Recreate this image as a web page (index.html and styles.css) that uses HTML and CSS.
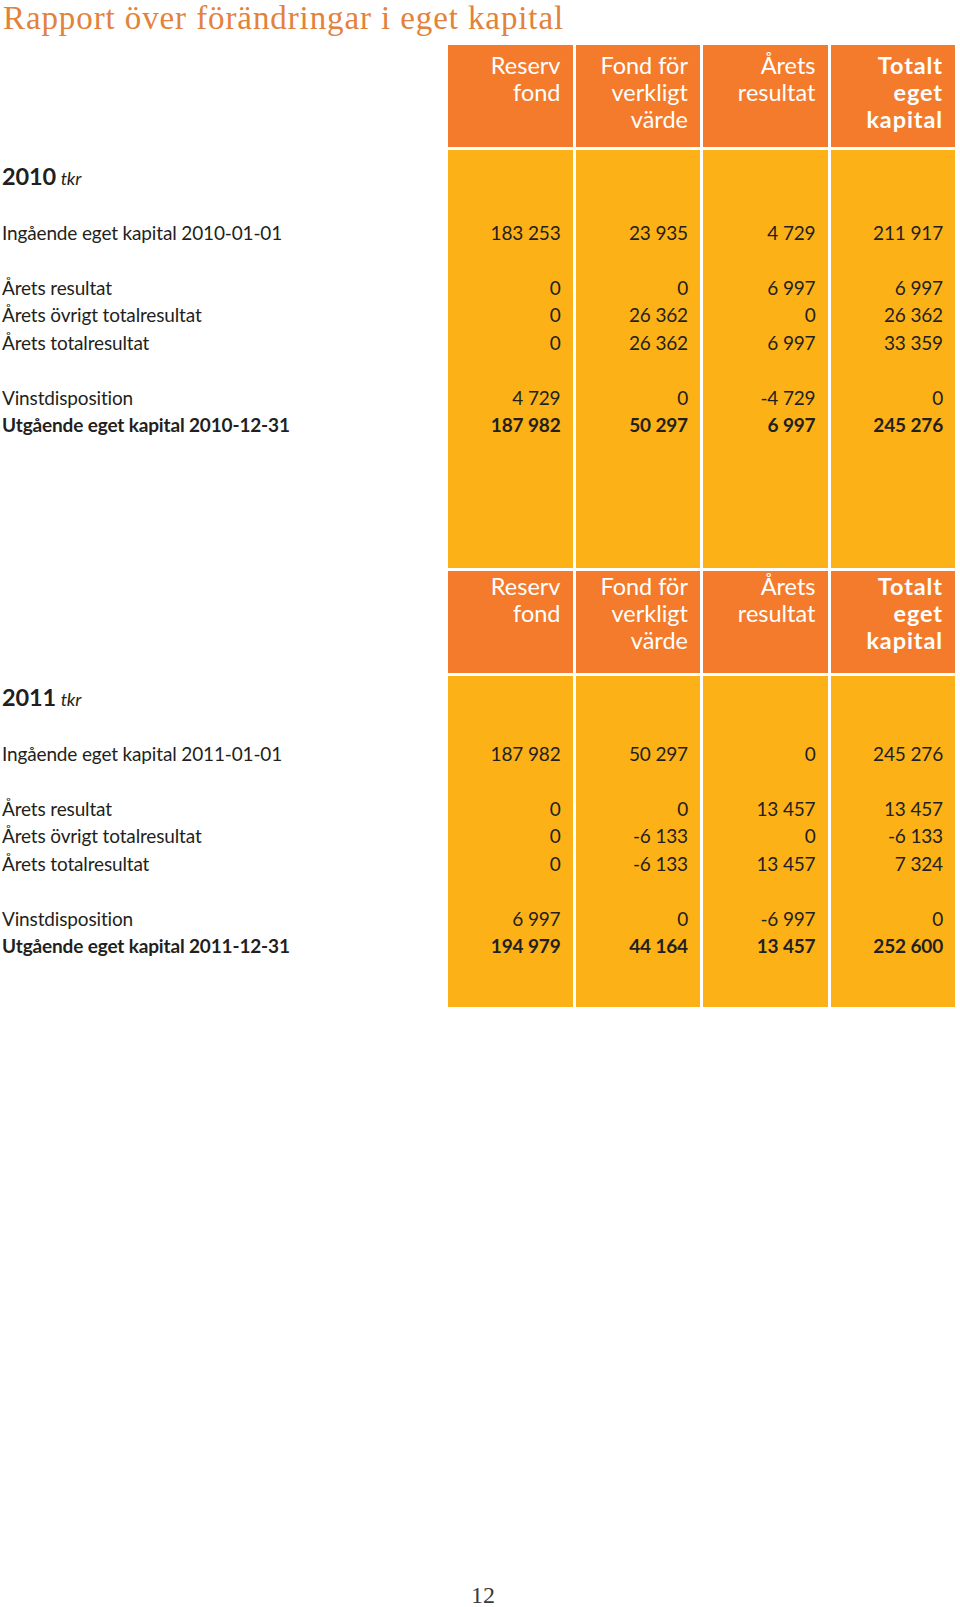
FILE: index.html
```html
<!DOCTYPE html>
<html lang="sv">
<head>
<meta charset="utf-8">
<title>Rapport över förändringar i eget kapital</title>
<link rel="stylesheet" href="styles.css">
</head>
<body>
<div class="page">
  <h1 class="title">Rapport över förändringar i eget kapital</h1>

  <section class="table t2010">
    <div class="row head">
      <div class="label"></div>
      <div class="hc">Reserv<br>fond</div>
      <div class="hc">Fond för<br>verkligt<br>värde</div>
      <div class="hc">Årets<br>resultat</div>
      <div class="hc strong">Totalt<br>eget<br>kapital</div>
    </div>
    <div class="body">
      <div class="row spacer top"><div class="label"></div><div class="v"></div><div class="v"></div><div class="v"></div><div class="v"></div></div>
      <div class="row year"><div class="label"><b>2010</b> <i>tkr</i></div><div class="v"></div><div class="v"></div><div class="v"></div><div class="v"></div></div>
      <div class="row"><div class="label"></div><div class="v"></div><div class="v"></div><div class="v"></div><div class="v"></div></div>
      <div class="row"><div class="label">Ingående eget kapital 2010-01-01</div><div class="v">183 253</div><div class="v">23 935</div><div class="v">4 729</div><div class="v">211 917</div></div>
      <div class="row"><div class="label"></div><div class="v"></div><div class="v"></div><div class="v"></div><div class="v"></div></div>
      <div class="row"><div class="label">Årets resultat</div><div class="v">0</div><div class="v">0</div><div class="v">6 997</div><div class="v">6 997</div></div>
      <div class="row"><div class="label">Årets övrigt totalresultat</div><div class="v">0</div><div class="v">26 362</div><div class="v">0</div><div class="v">26 362</div></div>
      <div class="row"><div class="label">Årets totalresultat</div><div class="v">0</div><div class="v">26 362</div><div class="v">6 997</div><div class="v">33 359</div></div>
      <div class="row"><div class="label"></div><div class="v"></div><div class="v"></div><div class="v"></div><div class="v"></div></div>
      <div class="row"><div class="label">Vinstdisposition</div><div class="v">4 729</div><div class="v">0</div><div class="v">-4 729</div><div class="v">0</div></div>
      <div class="row total"><div class="label">Utgående eget kapital 2010-12-31</div><div class="v">187 982</div><div class="v">50 297</div><div class="v">6 997</div><div class="v">245 276</div></div>
      <div class="row spacer bottom"><div class="label"></div><div class="v"></div><div class="v"></div><div class="v"></div><div class="v"></div></div>
    </div>
  </section>

  <section class="table t2011">
    <div class="row head">
      <div class="label"></div>
      <div class="hc">Reserv<br>fond</div>
      <div class="hc">Fond för<br>verkligt<br>värde</div>
      <div class="hc">Årets<br>resultat</div>
      <div class="hc strong">Totalt<br>eget<br>kapital</div>
    </div>
    <div class="body">
      <div class="row spacer top"><div class="label"></div><div class="v"></div><div class="v"></div><div class="v"></div><div class="v"></div></div>
      <div class="row year"><div class="label"><b>2011</b> <i>tkr</i></div><div class="v"></div><div class="v"></div><div class="v"></div><div class="v"></div></div>
      <div class="row"><div class="label"></div><div class="v"></div><div class="v"></div><div class="v"></div><div class="v"></div></div>
      <div class="row"><div class="label">Ingående eget kapital 2011-01-01</div><div class="v">187 982</div><div class="v">50 297</div><div class="v">0</div><div class="v">245 276</div></div>
      <div class="row"><div class="label"></div><div class="v"></div><div class="v"></div><div class="v"></div><div class="v"></div></div>
      <div class="row"><div class="label">Årets resultat</div><div class="v">0</div><div class="v">0</div><div class="v">13 457</div><div class="v">13 457</div></div>
      <div class="row"><div class="label">Årets övrigt totalresultat</div><div class="v">0</div><div class="v">-6 133</div><div class="v">0</div><div class="v">-6 133</div></div>
      <div class="row"><div class="label">Årets totalresultat</div><div class="v">0</div><div class="v">-6 133</div><div class="v">13 457</div><div class="v">7 324</div></div>
      <div class="row"><div class="label"></div><div class="v"></div><div class="v"></div><div class="v"></div><div class="v"></div></div>
      <div class="row"><div class="label">Vinstdisposition</div><div class="v">6 997</div><div class="v">0</div><div class="v">-6 997</div><div class="v">0</div></div>
      <div class="row total"><div class="label">Utgående eget kapital 2011-12-31</div><div class="v">194 979</div><div class="v">44 164</div><div class="v">13 457</div><div class="v">252 600</div></div>
      <div class="row spacer bottom"><div class="label"></div><div class="v"></div><div class="v"></div><div class="v"></div><div class="v"></div></div>
    </div>
  </section>

  <div class="pagenum">12</div>
</div>
</body>
</html>
```

FILE: styles.css
```css
* { box-sizing: border-box; }

html, body {
  margin: 0;
  padding: 0;
  background: #ffffff;
}

.page {
  width: 960px;
  height: 1607px;
  position: relative;
  font-family: "Lato", "Liberation Sans", sans-serif;
  color: #231f20;
  display: flex;
  flex-direction: column;
}

.title {
  margin: 0 0 8px 0;
  height: 37px;
  padding-left: 3px;
  font-family: "Liberation Serif", serif;
  font-weight: normal;
  font-size: 33px;
  letter-spacing: 0.9px;
  line-height: 37px;
  color: #e2823b;
  white-space: nowrap;
}

.table {
  display: flex;
  flex-direction: column;
  row-gap: 3px;
}

.t2011 {
  margin-top: 3px;
}

.body {
  display: flex;
  flex-direction: column;
}

.row {
  display: grid;
  grid-template-columns: 445px repeat(4, 124.5px);
  column-gap: 3px;
  height: 27.5px;
  font-size: 19px;
  letter-spacing: -0.15px;
  line-height: 27.5px;
}

.row.head {
  height: 102px;
  font-size: 23.5px;
  letter-spacing: 0;
  line-height: 27px;
}

.hc {
  background: #f47b2c;
  color: #ffffff;
  text-align: right;
  padding: 7px 12px 0 0;
}

.t2011 .hc {
  padding-top: 2px;
}

.hc.strong {
  font-weight: bold;
  letter-spacing: 0.9px;
}

.label {
  padding-left: 2px;
  white-space: nowrap;
}

.v {
  background: #fcb117;
  text-align: right;
  padding-right: 12px;
  white-space: nowrap;
}

.row.year {
  height: 29px;
  line-height: 29px;
}

.year b {
  font-size: 23.5px;
  font-weight: bold;
}

.year i {
  font-size: 18px;
}

.row.total {
  font-weight: bold;
}

.t2010 .spacer.top { height: 12px; }
.t2010 .spacer.bottom { height: 129.5px; }
.t2011 .spacer.top { height: 7px; }
.t2011 .spacer.bottom { height: 47px; }

.pagenum {
  position: absolute;
  left: 0;
  right: 0;
  top: 1580px;
  text-align: center;
  padding-left: 6px;
  font-family: "Liberation Serif", serif;
  font-size: 24px;
  line-height: 30px;
  color: #3a3a3a;
}
```
